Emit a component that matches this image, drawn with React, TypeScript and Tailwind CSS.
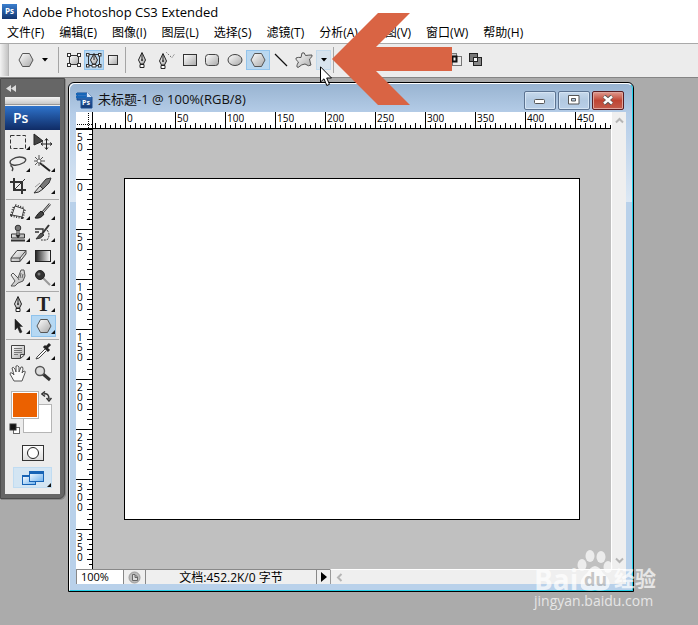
import React from "react";

const FONT = "font-['Open_Sans','Noto_Sans_CJK_SC',sans-serif]";

/* Gradients shared by every drawn icon. */
function Gradients() {
  return (
    <svg width="0" height="0" className="absolute" aria-hidden="true">
      <defs>
        <linearGradient id="metal" x1="0" y1="0" x2="1" y2="1">
          <stop offset="0" stopColor="#fff" />
          <stop offset="1" stopColor="#a8a8a8" />
        </linearGradient>
        <linearGradient id="fade" x1="0" y1="0" x2="1" y2="0">
          <stop offset="0" stopColor="#222" />
          <stop offset="1" stopColor="#fff" />
        </linearGradient>
        <linearGradient id="sky" x1="0" y1="0" x2="1" y2="1">
          <stop offset="0" stopColor="#fff" />
          <stop offset="1" stopColor="#6fb2ee" />
        </linearGradient>
        <linearGradient id="badge" x1="0" y1="0" x2="0" y2="1">
          <stop offset="0" stopColor="#3b7fcf" />
          <stop offset="1" stopColor="#12356f" />
        </linearGradient>
      </defs>
    </svg>
  );
}

type IconProps = { w?: number; h?: number; children: React.ReactNode };

function Icon({ w = 25, h = 22, children }: IconProps) {
  return (
    <svg width={w} height={h} viewBox={`0 0 ${w} ${h}`} fill="none" stroke="#333" strokeWidth="1" className="block shrink-0" aria-hidden="true">
      {children}
    </svg>
  );
}

const Nib = ({ dx = 0, dy = 0 }: { dx?: number; dy?: number }) => (
  <g transform={`translate(${dx} ${dy})`}>
    <path d="M5 .5 L1.5 8 L3.5 12 H6.5 L8.5 8 Z" fill="url(#metal)" stroke="#222" />
    <path d="M5 1 V7" stroke="#222" />
    <circle cx="5" cy="8" r="1" fill="#222" stroke="none" />
    <path d="M3 12.5 H7 V15.5 H3 Z" fill="#fff" stroke="#222" />
  </g>
);

const Corner = () => <path d="M24 15 V19 H20 Z" fill="#111" stroke="none" />;

const Hexagon = () => <path d="M4.500 .5 H11.5 L15 7 L11.500 13.500 H4.500 L1 7 Z" fill="url(#metal)" stroke="#555" />;

/* ---------- Options bar ---------- */

const shapeLayers = (
  <Icon w={14} h={14}>
    <rect x="2.5" y="2.5" width="9" height="9" fill="url(#metal)" />
    {[[0, 0], [10, 0], [0, 10], [10, 10]].map(([x, y]) => (
      <rect key={`${x}-${y}`} x={x + 0.5} y={y + 0.5} width="3" height="3" fill="#fff" />
    ))}
  </Icon>
);

const pathsIcon = (
  <Icon w={16} h={16}>
    <path d="M2.500 3 V13 M13.500 3 V13 M2.500 2.500 H13.500 M3 13.500 H13" />
    {[[0, 1], [12, 1], [0, 12], [12, 12]].map(([x, y]) => (
      <rect key={`${x}-${y}`} x={x + 0.5} y={y + 0.5} width="2.500" height="2.500" fill="#fff" />
    ))}
    <path d="M8 1.500 L4.500 8 L6.500 12 H9.500 L11.500 8 Z M8 2 V8" fill="url(#metal)" stroke="#222" />
    <path d="M6 12.500 H10 V15 H6 Z" fill="#fff" />
  </Icon>
);

type BarButton = { label: string; width: string; icon: React.ReactNode; on?: boolean };

const modeButtons: BarButton[] = [
  { label: "Shape layers", width: "w-5", icon: shapeLayers },
  { label: "Paths", width: "w-5", icon: pathsIcon, on: true },
  { label: "Fill pixels", width: "w-[17px]", icon: <Icon w={12} h={12}><rect x="1.5" y="1.500" width="9" height="9" fill="url(#metal)" /></Icon> },
];

const shapeButtons: BarButton[] = [
  { label: "Pen", width: "w-6", icon: <Icon w={10} h={16}><Nib /></Icon> },
  {
    label: "Freeform pen", width: "w-[26px]",
    icon: <Icon w={18} h={17}><Nib dy={1} /><path d="M8.500 .5 L12 4 L14 5.500 L17 1.500" stroke="#444" strokeDasharray="1 1.500" /></Icon>,
  },
  { label: "Rectangle", width: "w-5", icon: <Icon w={16} h={14}><rect x="1.500" y="1.500" width="13" height="11" fill="url(#metal)" /></Icon> },
  { label: "Rounded rectangle", width: "w-6", icon: <Icon w={16} h={14}><rect x="1.500" y="1.500" width="13" height="11" rx="3" fill="url(#metal)" stroke="#444" /></Icon> },
  { label: "Ellipse", width: "w-[22px]", icon: <Icon w={16} h={14}><ellipse cx="8" cy="7" rx="7" ry="5.500" fill="url(#metal)" stroke="#444" /></Icon> },
  { label: "Polygon", width: "w-6", icon: <Icon w={16} h={14}><Hexagon /></Icon>, on: true },
  { label: "Line", width: "w-[22px]", icon: <Icon w={14} h={14}><path d="M1 1 L13 13" stroke="#111" strokeWidth="1.300" /></Icon> },
  {
    label: "Custom shape", width: "w-6",
    icon: (
      <Icon w={20} h={18}>
        <path d="M8 2 Q10.500 .5 11.500 4.500 Q15 4 18 4 Q19 5.500 15.500 8 Q16 11 17 14 Q15 16 11 13 Q8 13 4 16.500 Q1.500 16 4.500 11 Q1 8.500 2 7 Q4 6 7 6.500 Z" fill="url(#metal)" stroke="#555" />
      </Icon>
    ),
  },
];

function BarButtons({ items }: { items: BarButton[] }) {
  return (
    <>
      {items.map((b) => (
        <button
          key={b.label}
          type="button"
          aria-label={b.label}
          aria-pressed={!!b.on}
          className={`${b.width} flex h-5 shrink-0 items-center justify-center border ${b.on ? "border-[#93c4ec] bg-[#bad8f0]" : "border-transparent"}`}
        >
          {b.icon}
        </button>
      ))}
    </>
  );
}

const Divider = () => <div className="h-[26px] w-px shrink-0 bg-[#a5a5a5]" />;

const DownArrow = () => (
  <Icon w={6} h={4}>
    <path d="M0 0 H6 L3 3.500 Z" fill="#000" stroke="none" />
  </Icon>
);

function OptionsBar() {
  return (
    <div className="flex h-[34px] items-center border-t border-[#a9a9a9] bg-[#ececec] pb-px">
      <div className="mr-2 h-full w-[9px] shrink-0 border-r border-[#b5b5b5] bg-linear-to-r from-[#f3f3f3] to-[#c4c4c4]" />
      <button type="button" aria-label="Current tool" className="flex h-6 w-[41px] shrink-0 items-center gap-2 pl-px">
        <Icon w={16} h={14}><Hexagon /></Icon>
        <DownArrow />
      </button>
      <Divider />
      <div className="mr-1 ml-1 flex pl-px"><BarButtons items={modeButtons} /></div>
      <Divider />
      <div className="ml-1 flex"><BarButtons items={shapeButtons} /></div>
      <div className="relative shrink-0">
        <button type="button" aria-label="Geometry options" className="flex h-5 w-[15px] items-center justify-center border border-[#c3daec] bg-[#d8e4ee]">
          <DownArrow />
        </button>
        {/* Pointer and callout float above the bar. */}
        <svg width="120" height="92" viewBox="0 0 120 92" className="pointer-events-none absolute -top-[37px] left-4 z-20" aria-hidden="true">
          <path d="M0 46 L46 0 H78 L44 34 H120 V58 H44 L78 92 H46 Z" fill="#d96444" />
        </svg>
        <svg width="13" height="21" viewBox="0 0 13 21" className="pointer-events-none absolute top-4 left-1 z-30" aria-hidden="true">
          <path d="M.5 .8 V16 L4 12.800 L6.800 19.500 L9.500 18.300 L6.700 12 H11.500 Z" fill="#fff" stroke="#000" />
        </svg>
      </div>
      <div className="mr-28 ml-0.5"><Divider /></div>
      <button type="button" aria-label="Intersect areas" className="mr-1 flex h-5 w-[17px] items-center justify-center">
        <Icon w={16} h={14}><rect x="1.500" y=".5" width="8" height="8" fill="#ccc" stroke="#777" /><rect x="5.500" y="3.500" width="9" height="9" stroke="#777" /><rect x="5.500" y="3.500" width="4" height="5" fill="#eee" stroke="#111" strokeWidth="2" /></Icon>
      </button>
      <button type="button" aria-label="Exclude areas" className="flex h-5 w-[17px] items-center justify-center">
        <Icon w={16} h={14}><rect x="1.500" y=".5" width="8" height="8" fill="#777" stroke="#222" /><rect x="5.500" y="4.500" width="8" height="8" fill="#888" stroke="#222" /><rect x="5.500" y="4.500" width="4" height="4" fill="#fff" stroke="#222" /></Icon>
      </button>
    </div>
  );
}

/* ---------- Tool palette ---------- */

type Tool = { name: string; art: React.ReactNode; on?: boolean };

const toolGroups: Tool[][] = [
  [
    { name: "Marquee", art: <><rect x="4.500" y="4.500" width="15" height="13" strokeDasharray="4 2" /><Corner /></> },
    { name: "Move", art: <><path d="M3 3 V14 L12 10 Z" fill="#444" stroke="#222" /><path d="M15.500 8 V18 M10.500 13 H20.500 M14 9.500 L15.500 7.500 L17 9.500 M14 16.500 L15.500 18.500 L17 16.500 M12 11.500 L10 13 L12 14.500 M19 11.500 L21 13 L19 14.500" stroke="#222" /></> },
    { name: "Lasso", art: <><path d="M6 12 Q2 9 6 6.500 Q11 3 17 4.500 Q22 6 18 9.500 Q12 13 7 12 Q5 10.500 5 13 Q8 15 6 18" stroke="#444" strokeWidth="1.400" /><Corner /></> },
    { name: "Magic wand", art: <><path d="M9 10 L19 18" stroke="#222" strokeWidth="2" /><path d="M8 2 V13 M3 8 H14 M4 4 L12 12 M12 4 L4 12" stroke="#555" /><circle cx="8" cy="8" r="2" fill="#fff" stroke="#666" /><Corner /></> },
    { name: "Crop", art: <><path d="M8 3 V15 H20 M4 7 H16 V19" stroke="#333" strokeWidth="2" /><path d="M7 16 L19 4" stroke="#333" /></> },
    { name: "Slice", art: <><path d="M20 3 L15 4 L9 11 L12 14 L18 8 Z" fill="#777" stroke="#333" /><path d="M9 11 L3 18 Q8 18 12 14 Z" fill="url(#metal)" stroke="#333" /><path d="M4 12 L9 8" stroke="#999" /><Corner /></> },
  ],
  [
    { name: "Patch", art: <><path d="M9 5 L18 8 L16 16 L6 14 Z" stroke="#333" strokeWidth="4" strokeDasharray="1 1.500" strokeLinejoin="round" /><path d="M9 5 L18 8 L16 16 L6 14 Z" fill="#eee" stroke="#444" strokeLinejoin="round" /><Corner /></> },
    { name: "Brush", art: <><path d="M19 3 L11 12" stroke="#333" strokeWidth="2.500" /><path d="M19 3 L12 11" stroke="#ddd" /><path d="M10 10 Q7 12 4 17 Q10 18 13 13 Z" fill="#444" stroke="#222" /><Corner /></> },
    { name: "Stamp", art: <><circle cx="12" cy="5" r="2.800" fill="#777" /><path d="M11 8 V11 H5.500 V15 H18.500 V11 H13 V8" fill="url(#metal)" /><path d="M5 17.500 H19" strokeWidth="2" /><path d="M10 12 H14 L12 15 Z" fill="#111" /><Corner /></> },
    { name: "History brush", art: <><path d="M18 2 L11 11" strokeWidth="2" /><path d="M10 10 L5 16 Q10 16 13 12 Z" fill="#555" /><path d="M4 6 H12 V10 M4 9 H8" stroke="#333" strokeWidth="1.400" /><path d="M16 7 Q20 12 16 17 H10" strokeDasharray="2 1" /><Corner /></> },
    { name: "Eraser", art: <><path d="M5 13 L11 5.500 H20 L14 13 Z M5 13 V16.500 H14 V13 M14 16.500 L20 9 V5.500" fill="url(#metal)" stroke="#444" /><Corner /></> },
    { name: "Gradient", art: <><rect x="4.500" y="5.500" width="15" height="11" fill="url(#fade)" stroke="#222" /><Corner /></> },
    { name: "Smudge", art: <><path d="M5 19 L9 14 L5 8 L7 6 L12 11 L15 3 L18 3 L19 9 L17 14 L12 16 L9 19 Z" fill="url(#metal)" stroke="#555" /><path d="M12 11 L13 13 M15 6 L14 11 M17 7 L16 11" stroke="#666" /><Corner /></> },
    { name: "Burn", art: <><path d="M12 11 L19 18" stroke="#999" strokeWidth="2" /><circle cx="9" cy="8" r="4.500" fill="#333" stroke="#222" /><circle cx="8" cy="7" r="1.500" fill="#777" stroke="none" /><Corner /></> },
  ],
  [
    { name: "Pen", art: <><Nib dx={7} dy={3} /><Corner /></> },
    { name: "Type", art: <Corner /> },
    { name: "Path selection", art: <><path d="M9 4 V15 L11.500 12.500 L14 18 L16 17 L13.500 11.500 H16.500 Z" fill="#222" stroke="#222" strokeWidth=".5" /><Corner /></> },
    { name: "Shape", art: <><g transform="translate(5 4)"><Hexagon /></g><Corner /></>, on: true },
  ],
  [
    { name: "Notes", art: <><path d="M5.500 4.500 H18.500 V14 L14.500 17.500 H5.500 Z M18 13.500 H14.500 V17" fill="url(#metal)" stroke="#444" /><path d="M8 7.500 H16 M8 9.500 H16 M8 11.500 H16 M8 13.500 H12" stroke="#777" /><Corner /></> },
    { name: "Eyedropper", art: <><path d="M14 8 L6 16 L5 18 L8 17 L15 10" fill="#fff" stroke="#444" /><path d="M13 5 L18 10 M15 7 L19 3" stroke="#222" strokeWidth="3" /><Corner /></> },
    { name: "Hand", art: <path d="M8 18 L4 11 Q4 9 6 10 L8 12 L6 5 Q7 3 9 6 L10 9 L10 3 Q12 2 13 4 V9 L15 4 Q17 3 17 6 L16 10 L18 8 Q20 8 19 10 L16 18 Z" fill="#fafafa" stroke="#555" /> },
    { name: "Zoom", art: <><path d="M12 11 L19 17" stroke="#333" strokeWidth="3" /><circle cx="9" cy="8" r="4.500" fill="#ddd" stroke="#555" strokeWidth="1.400" /></> },
  ],
];

function ToolPalette() {
  return (
    <aside className="flex w-[65px] shrink-0 flex-col self-start rounded-br-md border border-[#4c4c4c] bg-[#666] px-1 pb-1 shadow-[1px_1px_0_#8a8a8a]">
      <button type="button" aria-label="Collapse palette" className="flex h-[18px] items-center pl-px">
        <Icon w={10} h={7}>
          <path d="M5 0 V7 L0 3.500 Z M10 0 V7 L5 3.500 Z" fill="#ddd" stroke="none" />
        </Icon>
      </button>
      <div className="bg-[#ececec]">
        <div className="h-2 rounded-t-sm border-b border-[#999] bg-linear-to-b from-[#f4f4f4] to-[#c8c8c8]" />
        <div className={`mt-px flex h-6 items-center bg-linear-to-b from-[#2f74cc] to-[#102c66] pl-2 text-sm font-semibold text-white ${FONT}`}>Ps</div>
        {toolGroups.map((group, i) => (
          <div key={i} className={`mx-px grid grid-cols-[25px_25px] pt-px pb-0.5 ${i < toolGroups.length - 1 ? "border-b border-[#aaa]" : ""}`}>
            {group.map((t) => (
              <button
                key={t.name}
                type="button"
                aria-label={t.name}
                aria-pressed={!!t.on}
                className={`relative flex h-[22px] items-center justify-center ${t.on ? "bg-[#b5d8f3] outline outline-[#8fc3ec] -outline-offset-1" : ""}`}
              >
                <Icon>{t.art}</Icon>
                {t.name === "Type" && (
                  <span className="absolute inset-0 text-center font-['Liberation_Serif',serif] text-xl leading-[22px] font-bold text-[#222]">T</span>
                )}
              </button>
            ))}
          </div>
        ))}
        <div className="relative mx-auto h-[46px] w-[43px]">
          <button type="button" aria-label="Background color" className="absolute right-0.5 bottom-0 h-[29px] w-[29px] border border-[#b5b5b5] bg-white" />
          <button type="button" aria-label="Foreground color" className="absolute top-1 left-0 h-7 w-7 border border-[#b5b5b5] bg-[#eb6100] shadow-[inset_0_0_0_1px_#fff]" />
          <button type="button" aria-label="Swap colors" className="absolute top-1 right-0.5">
            <Icon w={11} h={11}><path d="M3 3 Q8 2 8 8 M4 .5 L1 3 L4 5.500 M5.500 7 L8 10 L10.500 7" stroke="#333" strokeWidth="1.500" /></Icon>
          </button>
          <button type="button" aria-label="Default colors" className="absolute -bottom-px -left-0.5">
            <Icon w={11} h={11}><rect x="4.500" y="4.500" width="6" height="6" fill="#fff" stroke="#666" /><rect x="1" y="1" width="6" height="6" fill="#111" stroke="#333" /></Icon>
          </button>
        </div>
        <button type="button" aria-label="Quick mask mode" className="mx-auto mt-3 flex h-4 w-[22px] items-center justify-center border border-[#333] bg-linear-to-b from-white to-[#ddd]">
          <Icon w={14} h={14}><circle cx="7" cy="7" r="5.500" fill="#fff" stroke="#222" /></Icon>
        </button>
        <div className="flex justify-center pt-1.5 pb-1.5">
          <button type="button" aria-label="Screen mode" className="flex h-[21px] w-[39px] items-center border border-[#c0dcf2] bg-[#d3e5f3]">
            <Icon w={37} h={19}>
              <rect x="8.500" y="7.500" width="13" height="9" fill="url(#sky)" stroke="#1763b5" /><path d="M8 8 H22" stroke="#1763b5" strokeWidth="2" />
              <rect x="15.500" y="3.500" width="14" height="10" fill="url(#sky)" stroke="#1763b5" /><path d="M15 4.500 H30" stroke="#1763b5" strokeWidth="3" />
              <path d="M37 15 V19 H33 Z" fill="#111" stroke="none" />
            </Icon>
          </button>
        </div>
      </div>
    </aside>
  );
}

/* ---------- Document window ---------- */

const steps = [1, 2, 3, 4, 5, 6, 7, 8, 9];
const tickPath = (horizontal: boolean) =>
  steps
    .map((n) => {
      const len = n % 2 ? 3 : 5;
      return horizontal ? `M${n * 5} ${5 - len}h1v${len}h-1z` : `M${5 - len} ${n * 5}h${len}v1h-${len}z`;
    })
    .join("");

function TopMark({ value }: { value?: number }) {
  return (
    <div className="relative h-4 w-[50px] shrink-0">
      <div className="h-full border-l border-black pl-px text-[10px] leading-[13px]">{value}</div>
      <svg width="50" height="5" className="absolute bottom-0 left-0" aria-hidden="true"><path d={tickPath(true)} /></svg>
    </div>
  );
}

function SideMark({ value }: { value: number }) {
  return (
    <div className="relative h-[50px] w-4 shrink-0">
      <div className="h-full border-t border-black pt-0.5 pl-px text-[10px] leading-[10px]">
        <div className="w-[7px] break-all">{value}</div>
      </div>
      <svg width="5" height="50" className="absolute top-0 right-0" aria-hidden="true"><path d={tickPath(false)} /></svg>
    </div>
  );
}

function Chevron({ d }: { d: string }) {
  return <Icon w={9} h={9}><path d={d} stroke="#b5b5b5" strokeWidth="2" /></Icon>;
}

function DocumentWindow() {
  const caption = "flex h-[19px] w-8 items-center justify-center rounded-xs border";
  return (
    <section className="mt-1 mr-16 mb-[33px] ml-[3px] flex min-w-0 flex-1 flex-col rounded-t-md border border-black bg-[#b9d1ea]">
      <div className="flex flex-1 flex-col rounded-t-md border border-t-white border-r-[#22cfe8] border-b-[#22cfe8] border-l-white bg-[linear-gradient(#99b4d1_0,#b5cde8_30px,#dce8f4_118px,#b9d1ea_118px)] pr-1.5 pb-1.5 pl-1.5">
        <header className="flex h-7 items-center gap-0.5 pt-1">
          <Icon w={18} h={18}>
            <path d="M1 2 H12 L16 6 V17 H5 V9 H1 Z" fill="url(#badge)" stroke="#1b4f94" /><path d="M11 1 L16 6 H11 Z" fill="#d5e5f7" stroke="none" />
            <path d="M0 3 H10 M0 6 H10" stroke="#1766b7" strokeWidth="2" />
            <text x="6" y="14" fontSize="7" fontWeight="bold" fill="#fff" stroke="none" fontFamily="Open Sans">Ps</text>
          </Icon>
          <h1 className="flex-1 truncate pl-0.5 text-[13px] text-[#111]">未标题-1 @ 100%(RGB/8)</h1>
          <div className="flex gap-0.5 pr-0.5">
            <button type="button" aria-label="Minimize" className={`${caption} border-[#5c7391] bg-linear-to-b from-[#c7d9ec] via-[#b2c9e1] via-50% to-[#b9cfe8] shadow-[inset_0_0_0_1px_#d6e5f4]`}>
              <Icon w={12} h={8}><rect x=".5" y="3.500" width="10" height="4" rx="1" fill="#fff" stroke="#555" /></Icon>
            </button>
            <button type="button" aria-label="Maximize" className={`${caption} border-[#5c7391] bg-linear-to-b from-[#c7d9ec] via-[#b2c9e1] via-50% to-[#b9cfe8] shadow-[inset_0_0_0_1px_#d6e5f4]`}>
              <Icon w={12} h={10}><path d="M.5 .5 H11 V9 H.5 Z M3.500 3.500 V6 H7.500 V3.500 Z" fill="#fff" fillRule="evenodd" stroke="#555" /></Icon>
            </button>
            <button type="button" aria-label="Close" className={`${caption} border-[#5a1d22] bg-linear-to-b from-[#df9a90] via-[#bf4433] via-50% to-[#c45c4c] shadow-[inset_0_0_0_1px_#e0a59c]`}>
              <Icon w={12} h={10}><path d="M2 1 L10 9 M10 1 L2 9" stroke="#555" strokeWidth="4" /><path d="M2 1.500 L10 8.500 M10 1.500 L2 8.500" stroke="#fff" strokeWidth="2.500" /></Icon>
            </button>
          </div>
        </header>
        <div className="flex min-h-0 flex-1">
          <div className="flex min-w-0 flex-1 flex-col">
            <div className="flex h-[17px] shrink-0 border-b border-black bg-white">
              <div className="h-full w-[17px] shrink-0 border-r border-black">
                <Icon w={16} h={16}><path d="M1 12.500 H16 M12.500 1 V16" stroke="#000" strokeDasharray="1 1" /></Icon>
              </div>
              <div className="flex w-8 shrink-0 justify-end overflow-hidden"><TopMark /></div>
              <div className="flex min-w-0 flex-1 overflow-hidden">
                {[0, 50, 100, 150, 200, 250, 300, 350, 400, 450].map((v) => <TopMark key={v} value={v} />)}
              </div>
            </div>
            <div className="flex min-h-0 flex-1">
              <div className="flex h-[440px] w-[17px] shrink-0 flex-col overflow-hidden border-r border-black bg-white">
                {[50, 0, 50, 100, 150, 200, 250, 300, 350].map((v, i) => <SideMark key={i} value={v} />)}
              </div>
              <main className="flex-1 bg-[#c0c0c0] pt-[49px] pl-[31px]">
                <div className="h-[342px] w-[456px] border border-black bg-white" />
              </main>
            </div>
          </div>
          <div className="flex w-[15px] shrink-0 flex-col items-center justify-between border-l border-white bg-[#efefef] py-1">
            <Chevron d="M1 6.500 L4.500 3 L8 6.500" />
            <Chevron d="M1 2.500 L4.500 6 L8 2.500" />
          </div>
        </div>
        <footer className="flex h-[15px] shrink-0 bg-[#efefef] text-xs leading-4 text-black">
          <input aria-label="Zoom level" defaultValue="100%" className="w-[47px] border-t border-l border-[#888] bg-white pl-1 text-[11px] outline-none" />
          <button type="button" aria-label="Version status" className="flex w-[22px] items-center justify-center border-t border-l border-[#888]">
            <Icon w={13} h={13}><circle cx="6.500" cy="6.500" r="5.500" fill="#bbb" stroke="#999" /><path d="M4.500 3.500 H7 L9.500 6 V9.500 H4.500 Z M7 4 V6.500 H9" fill="#ddd" stroke="#666" /></Icon>
          </button>
          <div className="w-[171px] border-t border-l border-[#888] text-center whitespace-nowrap">文档:452.2K/0 字节</div>
          <button type="button" aria-label="Status options" className="flex w-3.5 items-center justify-center border-t border-l border-[#888]">
            <Icon w={6} h={10}><path d="M0 0 L6 5 L0 10 Z" fill="#000" stroke="none" /></Icon>
          </button>
          <div className="flex flex-1 items-center border-t border-l border-t-white border-l-[#999] pl-1"><Chevron d="M6.500 1 L3 4.500 L6.500 8" /></div>
        </footer>
      </div>
    </section>
  );
}

function Watermark() {
  return (
    <div className={`pointer-events-none absolute right-10 bottom-4 z-40 w-[124px] text-white opacity-70 ${FONT}`}>
      <div className="flex h-[42px] items-end">
        <span className="w-[43px] text-[28px] leading-[26px] font-bold">Bai</span>
        <span className="relative flex h-[42px] w-[37px] items-end justify-center">
          <svg width="37" height="42" viewBox="0 0 37 42" className="absolute inset-0" fill="#fff" aria-hidden="true">
            <ellipse cx="5" cy="15" rx="4.500" ry="6" /><ellipse cx="13" cy="6" rx="4.500" ry="6" />
            <ellipse cx="24" cy="7" rx="4.500" ry="6" /><ellipse cx="31" cy="17" rx="4.500" ry="6" />
            <path d="M18 16 Q23 17 26 23 Q35 30 32 37 Q29 42 18 40 Q6 42 4 37 Q2 29 10 23 Q13 17 18 16 Z" />
          </svg>
          <span className="relative text-lg leading-[26px] font-bold text-[#b5b5b5]">du</span>
        </span>
        <span className="text-[21px] leading-[28px] font-bold whitespace-nowrap">经验</span>
      </div>
      <div className="text-sm leading-[17px]">jingyan.baidu.com</div>
    </div>
  );
}

const menus = ["文件(F)", "编辑(E)", "图像(I)", "图层(L)", "选择(S)", "滤镜(T)", "分析(A)", "视图(V)", "窗口(W)", "帮助(H)"];

export default function App() {
  return (
    <div className={`relative flex min-h-screen flex-col overflow-hidden bg-[#ababab] text-black ${FONT}`}>
      <Gradients />
      <div className="flex h-[23px] items-center gap-1.5 bg-white pl-0.5">
        <Icon w={15} h={15}>
          <rect width="15" height="15" fill="url(#badge)" stroke="none" />
          <text x="3" y="10" fontSize="8" fontWeight="bold" fill="#fff" stroke="none" fontFamily="Open Sans">Ps</text>
        </Icon>
        <span className="text-[13px] leading-5">Adobe Photoshop CS3 Extended</span>
      </div>
      <nav className="flex h-5 items-center gap-[15px] bg-white pl-[7px] text-xs">
        {menus.map((m) => <button key={m} type="button" className="shrink-0 whitespace-nowrap">{m}</button>)}
      </nav>
      <OptionsBar />
      <div className="flex flex-1 border-t border-[#858585]">
        <ToolPalette />
        <DocumentWindow />
      </div>
      <Watermark />
    </div>
  );
}
